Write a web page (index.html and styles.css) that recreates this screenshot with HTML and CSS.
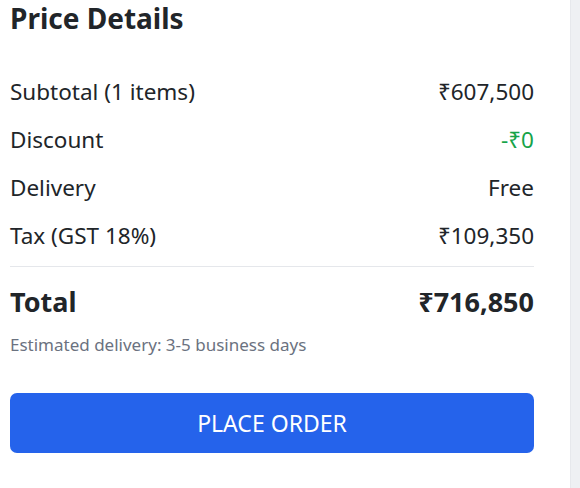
FILE: index.html
```html
<!DOCTYPE html>
<html>
<head>
<meta charset="utf-8">
<link rel="stylesheet" href="styles.css">
</head>
<body>
<div class="page">
  <div class="card">
    <h2 class="title">Price Details</h2>
    <div class="rows">
      <div class="row"><span>Subtotal (1 items)</span><span>₹607,500</span></div>
      <div class="row"><span>Discount</span><span class="green">-₹0</span></div>
      <div class="row"><span>Delivery</span><span>Free</span></div>
      <div class="row"><span>Tax (GST 18%)</span><span>₹109,350</span></div>
    </div>
    <div class="total"><span>Total</span><span>₹716,850</span></div>
    <p class="note">Estimated delivery: 3-5 business days</p>
    <button class="order">PLACE ORDER</button>
  </div>
  <div class="side"></div>
</div>
</body>
</html>
```
FILE: styles.css
```css
html, body {
  margin: 0;
  padding: 0;
  background: #ffffff;
  font-family: "Noto Sans", "Open Sans", sans-serif;
  color: #212529;
}
.page {
  display: flex;
  height: 488px;
  overflow: hidden;
}
.card {
  width: 524px;
  padding: 0 36px 0 10px;
  background: #fff;
}
.side {
  flex: 1;
  background: #eef0f3;
  border-left: 1px solid #e6e8ec;
}
.title {
  margin: 0;
  font-size: 28px;
  font-weight: 700;
  line-height: 36px;
}
.rows {
  margin-top: 42px;
  display: flex;
  flex-direction: column;
  gap: 20px;
  padding-bottom: 16px;
}
.row {
  display: flex;
  justify-content: space-between;
  font-size: 22.5px;
  line-height: 28px;
}
.green {
  color: #16a34a;
}
.total {
  border-top: 1px solid #e5e7eb;
  display: flex;
  justify-content: space-between;
  font-size: 27px;
  font-weight: 700;
  line-height: 34px;
  padding-top: 18px;
}
.note {
  margin: 15px 0 0;
  font-size: 17px;
  color: #6b7280;
  line-height: 22px;
}
.order {
  display: block;
  margin-top: 37px;
  width: 100%;
  height: 60px;
  border: none;
  border-radius: 7px;
  background: #2563eb;
  color: #fff;
  font-family: inherit;
  font-size: 23px;
}
```
